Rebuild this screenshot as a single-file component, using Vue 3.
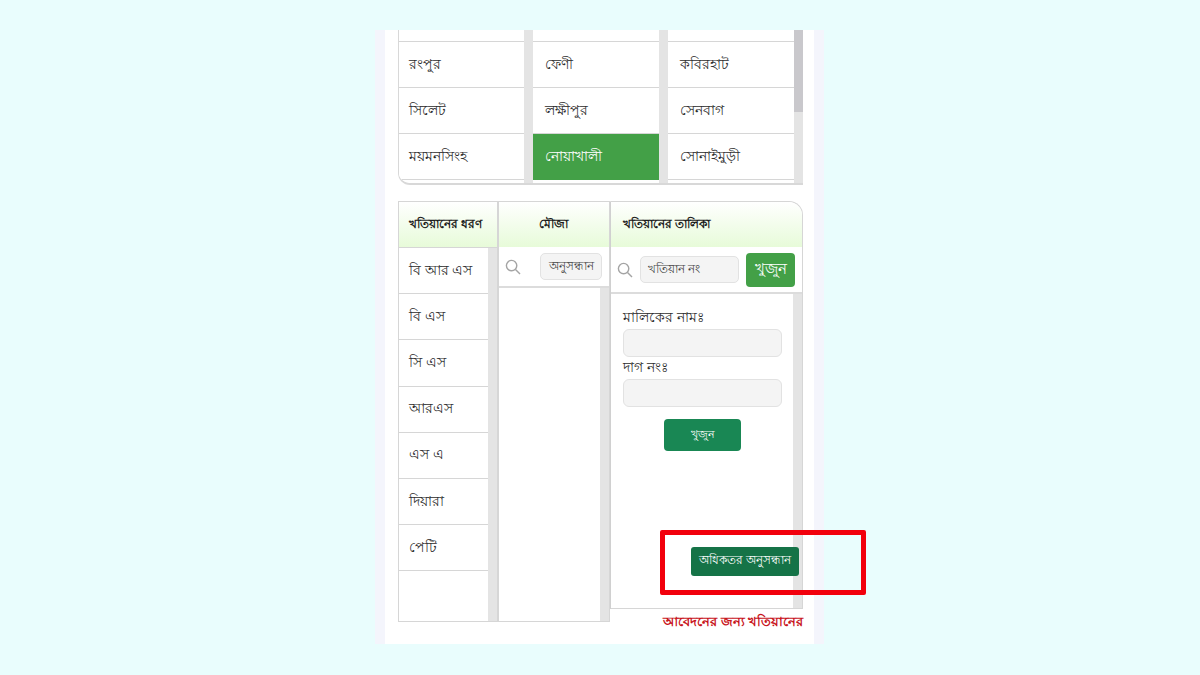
<script setup>
const divisions = ['', 'রংপুর', 'সিলেট', 'ময়মনসিংহ', '']
const districts = ['', 'ফেণী', 'লক্ষীপুর', 'নোয়াখালী', '']
const upazilas = ['', 'কবিরহাট', 'সেনবাগ', 'সোনাইমুড়ী', '']
const types = ['বি আর এস', 'বি এস', 'সি এস', 'আরএস', 'এস এ', 'দিয়ারা', 'পেটি']
</script>

<template>
  <div class="page">
    <main class="sheet">
      <section class="top">
        <div class="tcol">
          <div class="list">
            <div v-for="(d, i) in divisions" :key="i" class="cell" :class="{ stub: i === 0, tail: i === 4 }">{{ d }}</div>
          </div>
          <div class="track"></div>
        </div>
        <div class="tcol">
          <div class="list">
            <div v-for="(d, i) in districts" :key="i" class="cell" :class="{ stub: i === 0, tail: i === 4, active: i === 3 }">{{ d }}</div>
          </div>
          <div class="track"></div>
        </div>
        <div class="tcol">
          <div class="list">
            <div v-for="(d, i) in upazilas" :key="i" class="cell" :class="{ stub: i === 0, tail: i === 4 }">{{ d }}</div>
          </div>
          <div class="track"><div class="thumb"></div></div>
        </div>
      </section>

      <section class="bottom">
        <div class="bcol c1">
          <div class="head">খতিয়ানের ধরণ</div>
          <div class="bbody">
            <div class="list">
              <div v-for="t in types" :key="t" class="cell">{{ t }}</div>
            </div>
            <div class="track"></div>
          </div>
        </div>

        <div class="bcol c2">
          <div class="head center">মৌজা</div>
          <div class="search s2">
            <svg class="mag" viewBox="0 0 16 16"><circle cx="6.6" cy="6.6" r="5.2" /><path d="M10.5 10.5 15 15" /></svg>
            <div class="field f2">অনুসন্ধান</div>
          </div>
          <div class="bbody">
            <div class="list"></div>
            <div class="track"></div>
          </div>
        </div>

        <div class="c3wrap">
          <div class="bcol c3">
            <div class="head h3">খতিয়ানের তালিকা</div>
            <div class="search s3">
              <svg class="mag" viewBox="0 0 16 16"><circle cx="6.6" cy="6.6" r="5.2" /><path d="M10.5 10.5 15 15" /></svg>
              <div class="field f3">খতিয়ান নং</div>
              <button class="go">খুজুন</button>
            </div>
            <div class="form">
              <div class="track over"></div>
              <label class="lab">মালিকের নামঃ</label>
              <div class="inp"></div>
              <label class="lab">দাগ নংঃ</label>
              <div class="inp"></div>
              <button class="find">খুজুন</button>
              <button class="more">অধিকতর অনুসন্ধান</button>
            </div>
          </div>
          <div class="note">আবেদনের জন্য খতিয়ানের</div>
          <div class="mark"></div>
        </div>
      </section>
    </main>
  </div>
</template>

<style>
html, body { margin: 0; background: #e9fdfd; }
</style>

<style scoped>
.page {
  width: 1200px;
  height: 675px;
  padding-top: 30px;
  box-sizing: border-box;
  background: #e9fdfd;
  font-family: "Noto Sans", "Liberation Sans", sans-serif;
  color: #222;
  overflow: hidden;
}
.sheet {
  width: 449px;
  height: 614px;
  margin-left: 375px;
  padding-left: 23px;
  box-sizing: border-box;
  background: #fff;
  box-shadow: inset 10px 0 0 #f4f5fc, inset -10px 0 0 #f4f5fc;
}
.top {
  width: 405px;
  height: 155px;
  display: flex;
  border-bottom: 2px solid #d8d8d8;
  border-left: 1px solid #d8d8d8;
  border-bottom-left-radius: 12px;
  box-sizing: border-box;
  overflow: hidden;
}
.tcol { display: flex; height: 100%; }
.tcol:nth-child(1) { width: 134px; }
.tcol:nth-child(2) { width: 135px; }
.tcol:nth-child(3) { width: 135px; }
.tcol .list { flex: 1; min-width: 0; }
.tcol .cell { padding-top: 2px; }
.track { width: 9px; flex: none; background: #e4e4e4; position: relative; }
.thumb { height: 82px; background: #c9c8cc; }
.cell {
  height: 46px;
  box-sizing: border-box;
  padding-left: 10px;
  display: flex;
  align-items: center;
  font-size: 14px;
  color: #2c2c2c;
  border-bottom: 1.5px solid #d6d6d6;
  background: #fff;
}
.tcol:nth-child(n + 2) .cell { padding-left: 12px; }
.cell.stub { height: 11.6px; }
.cell.tail { height: 8px; border-bottom: 0; }
.cell.active { background: #43a047; color: #fff; border-bottom-color: #43a047; }

.bottom {
  margin-top: 16px;
  width: 405px;
  display: flex;
  position: relative;
}
.bcol { display: flex; flex-direction: column; box-sizing: border-box; }
.c1 { width: 100px; height: 421px; border: 1.5px solid #d6d6d6; border-right-width: 1px; }
.c2 { width: 112px; height: 421px; border: 1.5px solid #d6d6d6; border-left-width: 1px; }
.head {
  height: 45px;
  flex: none;
  display: flex;
  align-items: center;
  padding-left: 12px;
  font-size: 12px;
  font-weight: 700;
  color: #1c1c1c;
  box-sizing: border-box;
  background: linear-gradient(#fff, #e7fbd9);
}
.c1 .head { padding-left: 10px; }
.c2 .head { padding-right: 2px; }
.center { justify-content: center; padding-left: 0; }
.bbody { flex: 1; display: flex; min-height: 0; }
.bbody .list { flex: 1; min-width: 0; }
.c1 .bbody { border-top: 1.5px solid #d6d6d6; }
.c1 .cell { height: 46.2px; font-size: 13.6px; padding-top: 1px; }
.search { display: flex; align-items: center; flex: none; border-bottom: 2px solid #dcdcdc; box-sizing: border-box; }
.s2 { height: 41px; padding-left: 6px; }
.s3 { height: 47px; padding-left: 6px; }
.mag { width: 16px; height: 16px; fill: none; stroke: #a4a4a4; stroke-width: 1.4; flex: none; }
.field {
  background: #f4f4f4;
  border: 1px solid #e2e2e2;
  border-radius: 5px;
  box-sizing: border-box;
  font-size: 12px;
  color: #444;
  display: flex;
  align-items: center;
  white-space: nowrap;
  overflow: hidden;
}
.f2 { width: 62px; height: 27px; margin-left: 19px; padding-left: 8px; }
.f3 { width: 99px; height: 27px; margin-left: 7px; padding-left: 7px; }
.go {
  margin-left: 7px;
  width: 49px;
  height: 34px;
  border: 0;
  border-radius: 4px;
  background: #43a047;
  color: #fff;
  font: inherit;
  font-size: 15px;
  padding: 0;
}
.c3wrap { width: 193px; position: relative; }
.c3 {
  height: 408px;
  border-left: 1.5px solid #d0d0d0;
  border-top: 1.5px solid #d6d6d6;
  border-right: 1px solid #d6d6d6;
  border-top-right-radius: 14px;
}
.h3 { border-top-right-radius: 14px; }
.form {
  flex: 1;
  position: relative;
  display: flex;
  flex-direction: column;
  padding: 13px 12px 32px 12px;
  border-bottom: 1.5px solid #d6d6d6;
  min-height: 0;
}
.track.over { position: absolute; top: 0; right: 0; bottom: 0; }
.lab { font-size: 13.6px; color: #2c2c2c; line-height: 20px; position: relative; }
.inp {
  width: 159px;
  height: 28px;
  margin-top: 2px;
  background: #f4f4f4;
  border: 1px solid #e2e2e2;
  border-radius: 6px;
  box-sizing: border-box;
  position: relative;
}
.find {
  width: 77px;
  height: 32px;
  margin: 12px 0 0 41px;
  background: #198754;
  color: #fff;
  border: 0;
  border-radius: 4px;
  font: inherit;
  font-size: 11px;
  padding: 0;
  position: relative;
}
.more {
  width: 108px;
  height: 29px;
  margin-top: auto;
  margin-right: -9px;
  align-self: flex-end;
  background: #157347;
  color: #fff;
  border: 0;
  border-radius: 3px;
  font: inherit;
  font-size: 11.6px;
  padding: 0;
  white-space: nowrap;
  position: relative;
}
.note {
  margin-top: 2px;
  font-size: 13.4px;
  font-weight: 700;
  color: #c8141c;
  text-align: right;
  white-space: nowrap;
  line-height: 20px;
}
.mark {
  position: absolute;
  left: 50px;
  top: 329px;
  width: 206px;
  height: 65px;
  box-sizing: border-box;
  border: 5px solid #f2000c;
  border-radius: 2px;
  pointer-events: none;
}
</style>
